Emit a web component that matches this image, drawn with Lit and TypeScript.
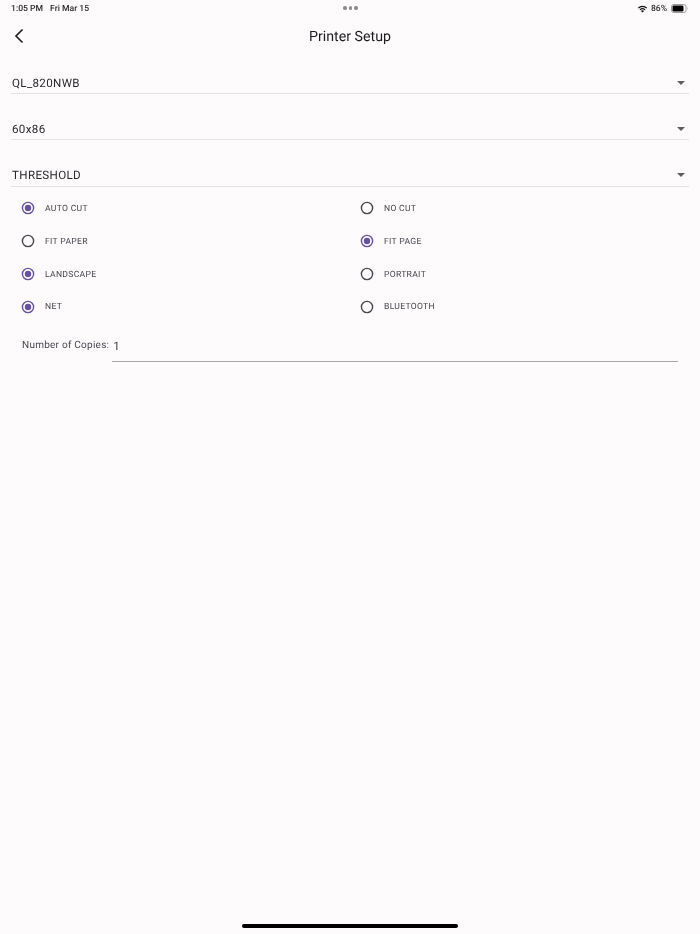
import { LitElement, html, svg, css } from 'lit';
import { customElement } from 'lit/decorators.js';

const PRINTER_SELECTS = ['QL_820NWB', '60x86', 'THRESHOLD'];

const RADIO_ROWS: [string, boolean][] = [
  ['AUTO CUT', true],
  ['NO CUT', false],
  ['FIT PAPER', false],
  ['FIT PAGE', true],
  ['LANDSCAPE', true],
  ['PORTRAIT', false],
  ['NET', true],
  ['BLUETOOTH', false],
];

@customElement('app-root')
export class AppRoot extends LitElement {
  static styles = css`
    :host {
      display: block;
      height: 934px;
      background: #fefbfd;
      color: #1c1b1f;
      font-family: Roboto, 'Noto Sans', sans-serif;
      text-rendering: geometricPrecision;
      overflow: hidden;
    }

    .page {
      position: relative;
      height: 934px;
      will-change: transform;
    }

    .status {
      display: flex;
      align-items: center;
      height: 17px;
      padding: 0 11px;
      font-size: 8.6px;
      font-weight: 500;
      color: #2b2a2d;
      position: relative;
    }

    .status .date {
      margin-left: 7px;
    }

    .dots {
      position: absolute;
      left: 343px;
      top: 6px;
      display: flex;
      gap: 2px;
    }

    .dots span {
      width: 3.5px;
      height: 3.5px;
      border-radius: 50%;
      background: #8d8b8e;
    }

    .status-right {
      margin-left: auto;
      display: flex;
      align-items: center;
      gap: 3px;
    }

    .battery {
      display: flex;
      align-items: center;
      margin-left: 1px;
    }

    .appbar {
      height: 39px;
      display: flex;
      align-items: center;
      justify-content: center;
      position: relative;
    }

    .appbar h1 {
      margin: 0;
      font-size: 14.2px;
      font-weight: 400;
      color: #1c1b1f;
    }

    .back {
      position: absolute;
      left: 13px;
      top: 11px;
    }

    .selects {
      display: flex;
      flex-direction: column;
      gap: 20.4px;
      padding: 12px 11px 0;
    }

    .select {
      height: 26px;
      box-sizing: border-box;
      padding: 4px 1px 0;
      display: flex;
      align-items: center;
      justify-content: space-between;
      border-bottom: 1px solid #e5e1e5;
      font-size: 11.6px;
      letter-spacing: 0.35px;
      color: #2a282d;
    }

    .caret {
      width: 0;
      height: 0;
      margin-right: 3.5px;
      border-left: 4px solid transparent;
      border-right: 4px solid transparent;
      border-top: 4px solid #5f5d61;
    }

    .radios {
      display: grid;
      grid-template-columns: 1fr 1fr;
      grid-auto-rows: 32.8px;
      padding: 5.3px 11px 0;
    }

    .radio {
      display: flex;
      align-items: center;
      gap: 10.5px;
      padding-left: 9.5px;
      font-size: 8.6px;
      letter-spacing: 0.3px;
      color: #49454f;
    }

    .radio svg {
      display: block;
    }

    .radio span {
      padding-top: 1px;
    }

    .copies {
      display: flex;
      padding: 6.7px 22px 0 22px;
      align-items: flex-start;
    }

    .copies label {
      font-size: 10px;
      letter-spacing: 0.25px;
      color: #49454f;
      margin-top: 10px;
      margin-right: 3px;
      white-space: nowrap;
    }

    .copies .field {
      flex: 1;
      height: 32px;
      box-sizing: border-box;
      border-bottom: 1px solid #a9a6ab;
      padding: 9px 1px 0;
      font-size: 11.5px;
      color: #3c3a3e;
    }

    .home {
      position: absolute;
      left: 242px;
      top: 924px;
      width: 216px;
      height: 4px;
      border-radius: 2px;
      background: #000;
    }
  `;

  private radioIcon(selected: boolean) {
    const color = selected ? '#6750a4' : '#49454f';
    return html`<svg width="14" height="14" viewBox="0 0 14 14">
      <circle cx="7" cy="7" r="5.6" fill="none" stroke=${color} stroke-width="1.4"></circle>
      ${selected ? svg`<circle cx="7" cy="7" r="3.2" fill=${color}></circle>` : ''}
    </svg>`;
  }

  render() {
    return html`
      <div class="page">
        <div class="status">
          <span>1:05 PM</span>
          <span class="date">Fri Mar 15</span>
          <div class="dots"><span></span><span></span><span></span></div>
          <div class="status-right">
            <svg width="11" height="9" viewBox="0 0 11 9">
              <path d="M5.5 8.6 L3.9 6.9 A2.4 2.4 0 0 1 7.1 6.9 Z" fill="#111"></path>
              <path d="M2.9 5.9 A3.8 3.8 0 0 1 8.1 5.9" fill="none" stroke="#111" stroke-width="1.2"></path>
              <path d="M1.2 4.1 A6.2 6.2 0 0 1 9.8 4.1" fill="none" stroke="#111" stroke-width="1.2"></path>
            </svg>
            <span>86%</span>
            <span class="battery">
              <svg width="18" height="9" viewBox="0 0 18 9">
                <rect x="0.5" y="0.5" width="14.5" height="8" rx="2.2" fill="none" stroke="#9a989b"></rect>
                <rect x="1.5" y="1.5" width="11" height="6" rx="1.2" fill="#000"></rect>
                <path d="M16 3 Q17.2 4.5 16 6 Z" fill="#9a989b"></path>
              </svg>
            </span>
          </div>
        </div>

        <div class="appbar">
          <svg class="back" width="13" height="16" viewBox="0 0 13 16">
            <path d="M9.5 1.5 L3 8 L9.5 14.5" fill="none" stroke="#1c1b1f" stroke-width="1.6"></path>
          </svg>
          <h1>Printer Setup</h1>
        </div>

        <div class="selects">
          ${PRINTER_SELECTS.map(
            (value) => html`<div class="select"><span>${value}</span><span class="caret"></span></div>`
          )}
        </div>

        <div class="radios">
          ${RADIO_ROWS.map(
            ([label, selected]) => html`<div class="radio">${this.radioIcon(selected)}<span>${label}</span></div>`
          )}
        </div>

        <div class="copies">
          <label>Number of Copies:</label>
          <div class="field">1</div>
        </div>

        <div class="home"></div>
      </div>
    `;
  }
}
